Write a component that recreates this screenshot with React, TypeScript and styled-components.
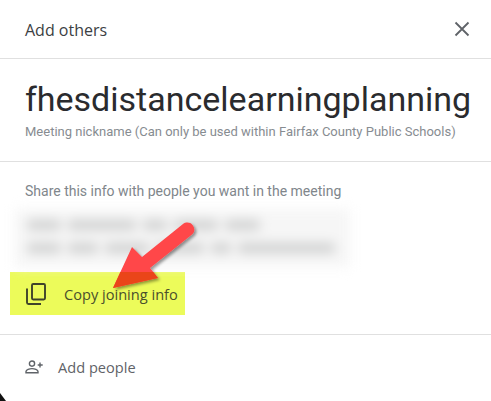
import React from "react";
import styled, { createGlobalStyle } from "styled-components";

const Global = createGlobalStyle`
  html, body { margin: 0; padding: 0; background: #fff; }
  body { width: 491px; height: 401px; overflow: hidden; }
`;

const Dialog = styled.div`
  position: relative;
  width: 491px;
  height: 401px;
  overflow: hidden;
  background: #fff;
  color: #3c4043;
  font-family: Roboto, "Liberation Sans", sans-serif;
`;

const Header = styled.header`
  display: flex;
  align-items: center;
  justify-content: space-between;
  height: 56px;
  padding: 2px 21px 0 25px;
  border-bottom: 1px solid #e0e0e0;
`;

const Title = styled.h1`
  margin: 0;
  font: 500 16px/20px "Open Sans", Roboto, sans-serif;
  color: #3c4043;
`;

const CloseIcon = styled.svg`
  display: block;
  width: 16px;
  height: 16px;
  margin-top: -2px;
`;

const NameBlock = styled.section`
  height: 102px;
  padding: 0 0 0 25px;
  border-bottom: 1px solid #e0e0e0;
`;

const MeetingName = styled.div`
  padding-top: 18px;
  font: 400 34px/44px Roboto, sans-serif;
  color: #2a2b2e;
  white-space: nowrap;
`;

const Nickname = styled.div`
  margin-top: 3px;
  font: 400 13px/16px Roboto, sans-serif;
  color: #878c91;
  white-space: nowrap;
`;

const InfoBlock = styled.section`
  height: 172px;
  border-bottom: 1px solid #e0e0e0;
`;

const ShareText = styled.div`
  padding: 20px 0 0 25px;
  font: 400 14px/19px Roboto, sans-serif;
  color: #80868b;
  white-space: nowrap;
`;

const Blurred = styled.div`
  display: flex;
  flex-direction: column;
  gap: 13px;
  width: 335px;
  height: 58px;
  margin: 8px 0 0 15px;
  padding: 11px 0 0 12px;
  box-sizing: border-box;
  background: #f6f6f6;
  filter: blur(6px);
`;

const BlurRow = styled.div`
  display: flex;
  gap: 7px;
`;

const BlurSegment = styled.span<{ $w: number }>`
  display: block;
  width: ${(p) => p.$w}px;
  height: 10px;
  border-radius: 4px;
  background: #cfd0d0;
`;

const CopyRow = styled.div`
  display: flex;
  align-items: center;
  gap: 18px;
  width: 175px;
  height: 43px;
  margin: 5px 0 0 10px;
  padding-left: 16px;
  box-sizing: border-box;
  background: #ecfb5a;
  color: #4a4f2c;
`;

const CopyIcon = styled.svg`
  flex: none;
  width: 20px;
  height: 22px;
`;

const RowLabel = styled.span`
  font: 500 14.6px/18px "Open Sans", Roboto, sans-serif;
  white-space: nowrap;
`;

const AddRow = styled.div`
  display: flex;
  align-items: center;
  gap: 15px;
  height: 64px;
  padding-left: 25px;
  color: #5f6368;
`;

const PersonIcon = styled.svg`
  flex: none;
  width: 18px;
  height: 14px;
`;

const Arrow = styled.svg`
  position: absolute;
  left: 100px;
  top: 215px;
  width: 110px;
  height: 100px;
  overflow: visible;
`;

const CornerMark = styled.svg`
  position: absolute;
  left: 0;
  bottom: 0;
  width: 6px;
  height: 8px;
`;

const rowOne = [34, 68, 24, 44, 35];
const rowTwo = [34, 30, 44, 48, 20, 97];

export default function App() {
  return (
    <Dialog>
      <Global />
      <Header>
        <Title>Add others</Title>
        <CloseIcon viewBox="0 0 16 16" aria-label="Close">
          <path d="M1.5 1.5 14.5 14.5M14.5 1.5 1.5 14.5" stroke="#5f6368" strokeWidth="1.8" fill="none" />
        </CloseIcon>
      </Header>
      <NameBlock>
        <MeetingName>fhesdistancelearningplanning</MeetingName>
        <Nickname>Meeting nickname (Can only be used within Fairfax County Public Schools)</Nickname>
      </NameBlock>
      <InfoBlock>
        <ShareText>Share this info with people you want in the meeting</ShareText>
        <Blurred>
          <BlurRow>
            {rowOne.map((w, i) => (
              <BlurSegment key={i} $w={w} />
            ))}
          </BlurRow>
          <BlurRow>
            {rowTwo.map((w, i) => (
              <BlurSegment key={i} $w={w} />
            ))}
          </BlurRow>
        </Blurred>
        <CopyRow>
          <CopyIcon viewBox="0 0 20 22" fill="none" stroke="#3f432a" strokeWidth="1.9">
            <rect x="6" y="1" width="13" height="15.500" rx="1.2" />
            <path d="M1 5.500v14a1.500 1.500 0 0 0 1.500 1.500H15" />
          </CopyIcon>
          <RowLabel>Copy joining info</RowLabel>
        </CopyRow>
      </InfoBlock>
      <AddRow>
        <PersonIcon viewBox="0 0 18 14" fill="none" stroke="#5f6368" strokeWidth="1.4">
          <circle cx="7" cy="3.6" r="2.6" />
          <path d="M1 12.800v-1.300c0-1.900 3.600-2.900 6-2.900s6 1 6 2.900v1.300Z" />
          <path d="M15 2.500v5M12.700 5h5" />
        </PersonIcon>
        <RowLabel>Add people</RowLabel>
      </AddRow>
      <Arrow viewBox="0 0 110 100">
        <defs>
          <filter id="arrowShadow" x="-20%" y="-20%" width="150%" height="150%">
            <feDropShadow dx="2" dy="2" stdDeviation="1.8" floodColor="#000" floodOpacity="0.4" />
          </filter>
        </defs>
        <path
          d="M83 9c3-2 7-2 9.500 1s2.500 7-.5 9.500L50 53l8 10-45 10 19-41 10 10Z"
          fill="#ff4648"
          filter="url(#arrowShadow)"
        />
        <path d="M20.400 57H53.200L58 63 13 73Z" fill="#ea4519" />
      </Arrow>
      <CornerMark viewBox="0 0 6 8">
        <path d="M0 0 6 8H0Z" fill="#111" />
      </CornerMark>
    </Dialog>
  );
}
